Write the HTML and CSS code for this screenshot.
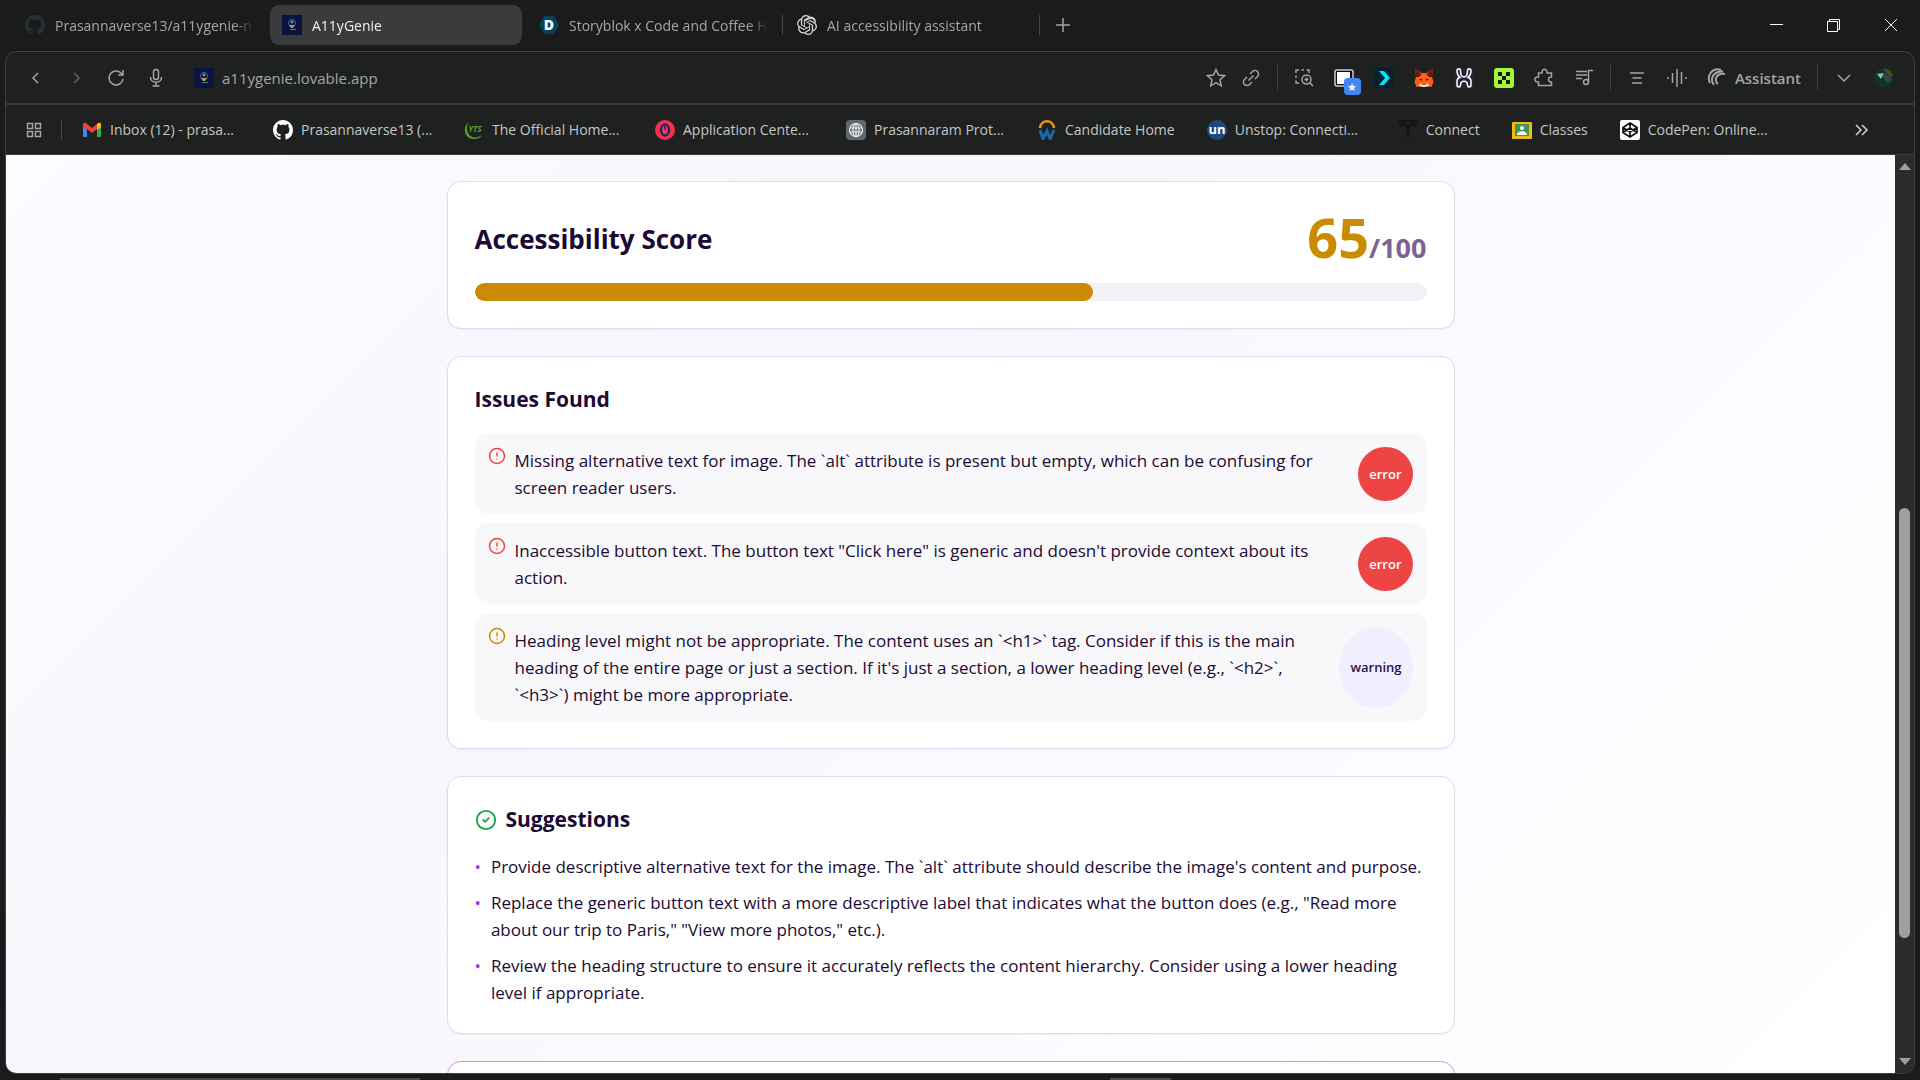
FILE: index.html
```html
<!DOCTYPE html>
<html lang="en">
<head>
    <meta charset="UTF-8">
    <meta name="viewport" content="width=device-width, initial-scale=1.0">
    <title>A11yGenie</title>
    <link rel="stylesheet" href="styles.css">
</head>
<body>

<!-- Shared icons -->
<svg class="sprite" aria-hidden="true">
    <symbol id="github" viewBox="0 0 16 16">
        <path fill="currentColor" d="M8 0C3.58 0 0 3.58 0 8c0 3.54 2.29 6.53 5.47 7.59.4.07.55-.17.55-.38 0-.19-.01-.82-.01-1.49-2.01.37-2.53-.49-2.69-.94-.09-.23-.48-.94-.82-1.13-.28-.15-.68-.52-.01-.53.63-.01 1.08.58 1.23.82.72 1.21 1.87.87 2.33.66.07-.52.28-.87.51-1.07-1.78-.2-3.64-.89-3.64-3.95 0-.87.31-1.59.82-2.15-.08-.2-.36-1.02.08-2.12 0 0 .67-.21 2.2.82.64-.18 1.32-.27 2-.27s1.36.09 2 .27c1.53-1.04 2.2-.82 2.2-.82.44 1.1.16 1.92.08 2.12.51.56.82 1.27.82 2.15 0 3.07-1.87 3.75-3.65 3.95.29.25.54.73.54 1.48 0 1.07-.01 1.93-.01 2.2 0 .21.15.46.55.38A8.01 8.01 0 0 0 16 8c0-4.42-3.58-8-8-8z"/>
    </symbol>
    <symbol id="genie" viewBox="0 0 20 20">
        <rect width="20" height="20" fill="#0b1440"/>
        <circle cx="10" cy="8" r="3.500" fill="none" stroke="#35708c" stroke-width="1"/>
        <circle cx="10" cy="7" r="1.400" fill="#4fa3a0"/>
        <path d="M7 10h6l-2 3H9z" fill="#c98f4c"/>
        <path d="M8 14.500h6" stroke="#338f78" stroke-width="1"/>
    </symbol>
    <symbol id="alert" viewBox="0 0 24 24">
        <g fill="none" stroke="currentColor" stroke-width="2" stroke-linecap="round">
            <circle cx="12" cy="12" r="10"/>
            <path d="M12 8v4M12 16h.01"/>
        </g>
    </symbol>
</svg>

<!-- Tab strip -->
<header class="tab-strip">
    <nav class="tabs">
        <a class="tab" href="#"><svg class="icon dim-github"><use href="#github"/></svg><span class="tab-title">Prasannaverse13/a11ygenie-n</span></a>
        <a class="tab active" href="#"><svg class="icon"><use href="#genie"/></svg><span class="tab-title">A11yGenie</span></a>
        <a class="tab" href="#">
            <svg class="icon" viewBox="0 0 20 20"><path d="M5 1h10l5 9-5 9H5l-5-9z" fill="#04435a"/><text x="10" y="15" text-anchor="middle" class="logo-d">D</text></svg>
            <span class="tab-title">Storyblok x Code and Coffee H</span>
        </a>
        <a class="tab divided" href="#">
            <svg class="icon" viewBox="0 0 24 24"><path fill="#d4d6d6" d="M22.28 9.82a5.98 5.98 0 0 0-.52-4.91 6.05 6.05 0 0 0-6.51-2.9A6.07 6.07 0 0 0 4.98 4.18a5.98 5.98 0 0 0-4 2.9 6.05 6.05 0 0 0 .74 7.1 5.98 5.98 0 0 0 .51 4.91 6.05 6.05 0 0 0 6.51 2.9A5.98 5.98 0 0 0 13.26 24a6.06 6.06 0 0 0 5.77-4.21 5.99 5.99 0 0 0 4-2.9 6.06 6.06 0 0 0-.75-7.07zm-9.02 12.61a4.48 4.48 0 0 1-2.88-1.04l.14-.08 4.78-2.76a.79.79 0 0 0 .39-.68v-6.74l2.02 1.17a.07.07 0 0 1 .04.05v5.58a4.5 4.5 0 0 1-4.49 4.5zM3.6 18.3a4.47 4.47 0 0 1-.53-3.01l.14.09 4.78 2.76a.77.77 0 0 0 .78 0l5.84-3.37v2.33a.08.08 0 0 1-.03.06L9.74 19.95a4.5 4.5 0 0 1-6.14-1.65zM2.34 7.9a4.49 4.49 0 0 1 2.37-1.97v5.68a.77.77 0 0 0 .39.68l5.81 3.35-2.02 1.17a.08.08 0 0 1-.07 0l-4.83-2.79A4.5 4.5 0 0 1 2.34 7.87zm16.6 3.86-5.84-3.39 2.02-1.16a.08.08 0 0 1 .07 0l4.83 2.79a4.49 4.49 0 0 1-.68 8.1v-5.68a.79.79 0 0 0-.4-.66zm2.01-3.02-.14-.09-4.77-2.78a.78.78 0 0 0-.79 0L9.41 10.24V7.9a.07.07 0 0 1 .03-.06l4.83-2.79a4.5 4.5 0 0 1 6.68 4.66zM8.31 12.86l-2.02-1.16a.08.08 0 0 1-.04-.06V6.07a4.5 4.5 0 0 1 7.38-3.45l-.14.08-4.78 2.76a.79.79 0 0 0-.39.68zm1.1-2.36 2.6-1.5 2.6 1.5v3l-2.6 1.5-2.6-1.5z"/></svg>
            <span class="tab-title">AI accessibility assistant</span>
        </a>
    </nav>
    <button class="icon-btn new-tab" aria-label="New tab"><svg class="icon" viewBox="0 0 20 20"><path d="M10 3v14M3 10h14"/></svg></button>
    <div class="window-controls">
        <button class="icon-btn" aria-label="Minimize"><svg class="icon" viewBox="0 0 20 20"><path d="M3 9.500h13"/></svg></button>
        <button class="icon-btn" aria-label="Restore"><svg class="icon" viewBox="0 0 20 20"><path d="M3.500 6.500h10v10h-10zM5.500 6V4.500h10v10H14"/></svg></button>
        <button class="icon-btn" aria-label="Close"><svg class="icon" viewBox="0 0 20 20"><path d="m4 4 12 12M16 4 4 16"/></svg></button>
    </div>
</header>

<div class="window">
    <!-- Address bar -->
    <div class="toolbar">
        <div class="nav-buttons">
            <button class="icon-btn" aria-label="Back"><svg class="icon" viewBox="0 0 20 20"><path d="m12 5-5 5 5 5"/></svg></button>
            <button class="icon-btn faded" aria-label="Forward"><svg class="icon" viewBox="0 0 20 20"><path d="m8 5 5 5-5 5"/></svg></button>
            <button class="icon-btn" aria-label="Reload"><svg class="icon" viewBox="0 0 20 20"><path d="M17 11a7 7 0 1 1-2-6l2 2M17 2v5h-5"/></svg></button>
            <button class="icon-btn" aria-label="Voice"><svg class="icon" viewBox="0 0 20 20"><rect x="7.500" y="1.500" width="5" height="10" rx="2.500"/><path d="M4.500 9c0 7 11 7 11 0M10 14.500V18M6.500 18h7"/></svg></button>
        </div>
        <div class="address">
            <svg class="icon"><use href="#genie"/></svg>
            <input class="url" type="text" value="a11ygenie.lovable.app" aria-label="Address">
        </div>
        <div class="tools tight">
            <button class="icon-btn" aria-label="Bookmark"><svg class="icon" viewBox="0 0 20 20"><path d="m10 1.500 2.500 5.600 6.100.6-4.600 4.100 1.300 6L10 14.700l-5.300 3.100 1.300-6L1.400 7.700l6.100-.6z"/></svg></button>
            <button class="icon-btn" aria-label="Copy link"><svg class="icon" viewBox="0 0 20 20"><path d="M9 6l2.500-2.500a3.400 3.400 0 0 1 5 5L14 11M11 14l-2.500 2.500a3.400 3.400 0 0 1-5-5L6 9M7.500 12.500l5-5"/></svg></button>
        </div>
        <div class="tools">
            <button class="icon-btn" aria-label="Snapshot"><svg class="icon" viewBox="0 0 20 20"><path d="M2 5V2h3M7.500 2h2.500M12.500 2h2.500v3M2 7.500V10M2 12.500V15h3"/><circle cx="12.500" cy="11.500" r="4.500"/><path d="m16 15 3 3M12.500 9.500v4M10.500 11.500h4"/></svg></button>
            <button class="icon-btn badged" aria-label="Saved tabs">
                <svg class="icon" viewBox="0 0 20 20"><rect x="1" y="2" width="18" height="16" rx="2" fill="#111" stroke="#c9cbcb"/><rect x="3" y="4" width="13" height="12" fill="#fff" stroke="none"/></svg>
                <span class="badge-star">★</span>
            </button>
            <button class="icon-btn" aria-label="Arrow extension"><svg class="icon" viewBox="0 0 20 20"><rect width="20" height="20" rx="4" fill="#04212c" stroke="none"/><path d="M5 3h5l6 7-6 7H5l6-7z" fill="#00e5ff" stroke="none"/></svg></button>
            <button class="icon-btn" aria-label="MetaMask"><svg class="icon" viewBox="0 0 20 20"><g stroke="none"><path d="m1 1 6.500 4h5L19 1l-1 8 1.500 5-2 5-4-1-2 1h-3l-2-1-4 1-2-5L2 9z" fill="#ff5c16"/><path d="m1 1 6.500 5L5 9H2zM19 1l-6.500 5L15 9h3z" fill="#661800"/><path d="M5 11h3v2zM15 11h-3v2z" fill="#35190a"/><path d="m7 15 1 2h4l1-2 3 3-5 1H9l-5-1z" fill="#f3e2d8"/></g></svg></button>
            <button class="icon-btn" aria-label="Hyper extension"><svg class="icon" viewBox="0 0 20 20"><rect x="1" width="18" height="20" fill="#24243e" stroke="none"/><path class="hyper" d="M3 3c0-3 3.500-3 3.500 0 0 8 7 8 7 0 0-3 3.500-3 3.500 0 0 4-1 5-3 6.500 2 .5 3 1.500 3 3.500v4c0 2.500-3.500 2.500-3.500 0 0-5-7-5-7 0 0 2.500-3.500 2.500-3.500 0v-4c0-2 1-3 3-3.500C4 8 3 7 3 3z"/></svg></button>
            <button class="icon-btn" aria-label="Grid extension"><svg class="icon" viewBox="0 0 20 20"><g stroke="none"><rect width="20" height="20" rx="3" fill="#a6f53a"/><path d="M4 4h4v4H4zM12 4h4v4h-4zM8 8h4v4H8zM4 12h4v4H4zM12 12h4v4h-4z" fill="#101d0a"/></g></svg></button>
            <button class="icon-btn" aria-label="Extensions"><svg class="icon" viewBox="0 0 20 20"><path d="M4.500 5H8c-.5-5 5.500-5 5 0h4.500v4c-4-.5-4 5.500 0 5v3.500h-13V14c-5 .5-5-5.500 0-5z"/></svg></button>
            <button class="icon-btn" aria-label="Player"><svg class="icon" viewBox="0 0 20 20"><path d="M2 3.500h11M2 7h11M2 10.500h6M14.500 14V2.500H19"/><circle cx="12" cy="14" r="2.500"/></svg></button>
        </div>
        <div class="tools">
            <button class="icon-btn" aria-label="Reader"><svg class="icon" viewBox="0 0 20 20"><path d="M3 5h14M5.500 10h9M5 15h10"/></svg></button>
            <button class="icon-btn" aria-label="Sound"><svg class="icon" viewBox="0 0 20 20"><path d="M1 9v2M5.500 5v10M10 1v18M14.500 4v12M19 9v2"/></svg></button>
            <button class="icon-btn assistant"><svg class="icon" viewBox="0 0 20 20"><path d="M3 15C-1 7 6-1 14 2M7 17C2 10 7 3 16 3.500M11 16C6 11 10 5 18 6" class="thick"/></svg>Assistant</button>
        </div>
        <div class="tools">
            <button class="icon-btn" aria-label="Expand"><svg class="icon" viewBox="0 0 20 20"><path d="m4 7 6 6 6-6"/></svg></button>
            <button class="icon-btn" aria-label="Profile"><svg class="icon" viewBox="0 0 20 20"><g stroke="none"><circle cx="10" cy="10" r="10" fill="#14302a"/><path d="M9 1c5-1 9 2 10 7l-4 1z" fill="#4a461d"/><path d="m10 5 8 6-4 4-5-5z" fill="#33474a"/><path d="M3 6l7-1-3 6z" fill="#7cc7b5"/></g></svg></button>
        </div>
    </div>

    <!-- Bookmarks -->
    <nav class="bookmarks">
        <button class="icon-btn speed-dial" aria-label="Speed dial"><svg class="icon" viewBox="0 0 20 20"><path d="M3.500 3.500h5v5h-5zM11.500 3.500h5v5h-5zM3.500 11.500h5v5h-5zM11.500 11.500h5v5h-5z"/></svg></button>
        <a class="bookmark long" href="#"><svg class="icon" viewBox="0 0 20 20"><path d="M1 17V5l4 3v9z" fill="#4285f4"/><path d="M15 17V8l4-3v12z" fill="#34a853"/><path d="M1 7V4c0-1 2-2 4 0l5 4 5-4v5l-5 4-5-4v1z" fill="#ea4335"/><path d="M15 4c2-2 4-1 4 0v3l-4 3z" fill="#fbbc04"/></svg><span>Inbox (12) - prasa...</span></a>
        <a class="bookmark long" href="#"><svg class="icon white"><use href="#github"/></svg><span>Prasannaverse13 (...</span></a>
        <a class="bookmark long" href="#"><svg class="icon" viewBox="0 0 20 20"><path d="M5 2C-2 7 0 19 10 19c3 0 6-1 8-4-5 4-12 3-14-2-2-4-1-8 1-11z" fill="#58a52b"/><text x="11" y="12" text-anchor="middle" class="logo-yts">YTS</text></svg><span>The Official Home...</span></a>
        <a class="bookmark long" href="#"><svg class="icon" viewBox="0 0 20 20"><circle cx="10" cy="10" r="10" fill="#fa2f4f"/><ellipse cx="10" cy="10" rx="4" ry="5.500" fill="#fb4055" stroke="#27245f" stroke-width="2.500"/><path d="M10 6v4" stroke="#27245f" stroke-width="1.500"/></svg><span>Application Cente...</span></a>
        <a class="bookmark long" href="#"><svg class="icon" viewBox="0 0 20 20"><rect width="20" height="20" rx="4" fill="#5f686d"/><g fill="none" stroke="#f0f2f2" stroke-width="1.200"><circle cx="10" cy="10" r="6.500"/><ellipse cx="10" cy="10" rx="3" ry="6.500"/><path d="M10 3.500v13M4 8h12M4 12h12"/></g></svg><span>Prasannaram Prot...</span></a>
        <a class="bookmark" href="#"><svg class="icon" viewBox="0 0 20 20"><path d="M3 8c1-9 13-9 14 0" fill="none" stroke="#e8951c" stroke-width="2.500"/><path d="m3 10 3 9 4-8 3 8 4-9" fill="none" stroke="#1769a8" stroke-width="3"/></svg><span>Candidate Home</span></a>
        <a class="bookmark long" href="#"><svg class="icon" viewBox="0 0 20 20"><circle cx="10" cy="10" r="10" fill="#1c4980"/><text x="10" y="14" text-anchor="middle" class="logo-un">un</text></svg><span>Unstop: Connecti...</span></a>
        <a class="bookmark" href="#"><svg class="icon" viewBox="0 0 20 20"><path d="M0 1c6-2 14-2 20 0l-1 2c-6-2-12-2-18 0zM2 4c3-1 5-1 6 0l2 2 2-2c1-1 3-1 6 0l-1 2c-2-1-4-1-5 0l-2 13L8 6c-1-1-3-1-5 0z" fill="#101211"/></svg><span>Connect</span></a>
        <a class="bookmark" href="#"><svg class="icon" viewBox="0 0 20 20"><rect y="2" width="20" height="17" rx="1" fill="#f5b912"/><rect x="3" y="4" width="14" height="12" fill="#3f9654"/><circle cx="10" cy="8" r="2" fill="#fff"/><path d="M5 15c0-5 10-5 10 0z" fill="#fff"/></svg><span>Classes</span></a>
        <a class="bookmark" href="#"><svg class="icon" viewBox="0 0 20 20"><rect width="20" height="20" rx="2" fill="#fff"/><path d="m10 3 7 4.500v5L10 17l-7-4.500v-5zM10 3v5M10 12v5M3 7.500l7 4.500 7-4.500M3 12.500 10 8l7 4.500" fill="none" stroke="#111" stroke-width="1.700"/></svg><span>CodePen: Online...</span></a>
        <button class="icon-btn more" aria-label="More bookmarks"><svg class="icon" viewBox="0 0 20 20"><path d="m4 5 5 5-5 5M10 5l5 5-5 5"/></svg></button>
    </nav>

    <div class="viewport">
        <main class="page">
            <div class="container">
                <!-- Score -->
                <section class="card">
                    <div class="score-row">
                        <h2>Accessibility Score</h2>
                        <div class="score">65<span class="score-total">/100</span></div>
                    </div>
                    <div class="progress"><div class="progress-fill" style="width: 65%"></div></div>
                </section>

                <!-- Issues -->
                <section class="card">
                    <h3>Issues Found</h3>
                    <ul class="issues">
                        <li class="issue error">
                            <svg class="issue-icon"><use href="#alert"/></svg>
                            <p>Missing alternative text for image. The `alt` attribute is present but empty, which can be confusing for screen reader users.</p>
                            <span class="badge">error</span>
                        </li>
                        <li class="issue error">
                            <svg class="issue-icon"><use href="#alert"/></svg>
                            <p>Inaccessible button text. The button text "Click here" is generic and doesn't provide context about its action.</p>
                            <span class="badge">error</span>
                        </li>
                        <li class="issue warning">
                            <svg class="issue-icon"><use href="#alert"/></svg>
                            <p>Heading level might not be appropriate. The content uses an `&lt;h1&gt;` tag. Consider if this is the main heading of the entire page or just a section. If it's just a section, a lower heading level (e.g., `&lt;h2&gt;`, `&lt;h3&gt;`) might be more appropriate.</p>
                            <span class="badge">warning</span>
                        </li>
                    </ul>
                </section>

                <!-- Suggestions -->
                <section class="card">
                    <h3><svg class="check-icon" viewBox="0 0 24 24"><circle cx="12" cy="12" r="10"/><path d="m9 12 2 2 4-4"/></svg>Suggestions</h3>
                    <ul class="suggestions">
                        <li><span class="bullet">•</span><p>Provide descriptive alternative text for the image. The `alt` attribute should describe the image's content and purpose.</p></li>
                        <li><span class="bullet">•</span><p>Replace the generic button text with a more descriptive label that indicates what the button does (e.g., "Read more about our trip to Paris," "View more photos," etc.).</p></li>
                        <li><span class="bullet">•</span><p>Review the heading structure to ensure it accurately reflects the content hierarchy. Consider using a lower heading level if appropriate.</p></li>
                    </ul>
                </section>

                <section class="card highlight"></section>
            </div>
        </main>
        <div class="scrollbar">
            <span class="arrow up"></span>
            <div class="thumb"></div>
            <span class="arrow down"></span>
        </div>
    </div>
</div>

<footer class="desktop-edge">
    <span class="edge-search"></span>
    <span class="edge-app"></span>
</footer>

</body>
</html>
```
FILE: styles.css
```css
* {
    box-sizing: border-box;
}

body {
    margin: 0;
    height: 100vh;
    display: flex;
    flex-direction: column;
    overflow: hidden;
    background: #1a1c1b;
    color: #c4c6c6;
    font-family: "Segoe UI", "Open Sans", sans-serif;
    font-size: 14px;
}

h2, h3, p, ul {
    margin: 0;
    padding: 0;
}

ul {
    list-style: none;
}

a {
    color: inherit;
    text-decoration: none;
}

.sprite {
    display: none;
}

.icon {
    width: 20px;
    height: 20px;
    flex: none;
    display: block;
}

.icon-btn {
    padding: 0;
    border: none;
    background: none;
    color: #a3a5a5;
    font: inherit;
    cursor: pointer;
}

.icon-btn .icon {
    fill: none;
    stroke: currentColor;
    stroke-width: 1.5;
    overflow: visible;
}

.icon-btn .thick {
    stroke-width: 2;
}

.icon-btn .hyper {
    stroke: #fff;
}

.icon-btn.faded {
    color: #606262;
}

.white {
    color: #fff;
}

/* Tab strip */
.tab-strip {
    display: flex;
    align-items: center;
    height: 51px;
    padding: 0 19px 1px 12px;
}

.tabs {
    display: flex;
    align-items: center;
}

.tab {
    display: flex;
    align-items: center;
    gap: 10px;
    width: 258px;
    height: 40px;
    padding: 0 16px 0 13px;
    border-radius: 9px;
    color: #a5a7a7;
    position: relative;
}

.tab.active {
    width: 252px;
    padding-left: 12px;
    background: #393b3c;
    color: #f2f2f2;
    margin-right: 4px;
}

.tab-title {
    flex: 1;
    overflow: hidden;
    white-space: nowrap;
    mask-image: linear-gradient(to right, #000 90%, transparent);
}

.tab.divided::before, .tab.divided::after {
    content: "";
    position: absolute;
    top: 10px;
    left: -2px;
    width: 1px;
    height: 20px;
    background: #454747;
}

.tab.divided::after {
    left: auto;
    right: 2px;
}

.dim-github {
    color: #2a3038;
}

.new-tab {
    margin-left: 11px;
}

.logo-d {
    fill: #fff;
    font-size: 14px;
    font-weight: 800;
}

.logo-yts {
    fill: #58a52b;
    font-size: 8px;
    font-style: italic;
    font-weight: 700;
}

.logo-un {
    fill: #fff;
    font-size: 13px;
    font-weight: 700;
}

.window-controls {
    display: flex;
    gap: 37px;
    margin-left: auto;
}

.window-controls .icon-btn {
    color: #fff;
}

.window-controls .icon {
    stroke-width: 1;
}

/* Browser window */
.window {
    flex: 1;
    min-height: 0;
    display: flex;
    flex-direction: column;
    margin: 0 5px;
    border: 1px solid #3e4040;
    border-radius: 11px;
    background: #1f2120;
    overflow: hidden;
}

.toolbar {
    display: flex;
    align-items: center;
    height: 53px;
    padding: 0 20px;
    border-bottom: 2px solid #383a3a;
}

.nav-buttons {
    display: flex;
    gap: 20px;
}

.address {
    flex: 1;
    display: flex;
    align-items: center;
    gap: 8px;
    margin-left: 28px;
}

.url {
    flex: 1;
    padding: 0;
    border: none;
    outline: none;
    background: none;
    color: #a3a5a5;
    font: inherit;
    font-size: 15px;
}

.tools {
    display: flex;
    align-items: center;
    gap: 20px;
}

.tools.tight {
    gap: 15px;
}

.tools + .tools::before {
    content: "";
    width: 1px;
    height: 25px;
    margin: 0 -4px;
    background: #424444;
}

.tools + .tools {
    padding-left: 20px;
}

.assistant {
    display: flex;
    align-items: center;
    gap: 8px;
    font-size: 15px;
    font-weight: 600;
}

.badged {
    position: relative;
}

.badge-star {
    position: absolute;
    top: 10px;
    left: 10px;
    width: 17px;
    height: 17px;
    border-radius: 4px;
    background: #4285f4;
    color: #fff;
    font-size: 11px;
    line-height: 17px;
    text-align: center;
}

/* Bookmarks */
.bookmarks {
    display: flex;
    align-items: center;
    gap: 32px;
    height: 50px;
    padding: 0 42px 0 18px;
    border-bottom: 1px solid #383a3a;
}

.icon-btn.speed-dial {
    padding-right: 17px;
    margin-right: -12px;
    border-right: 1px solid #454747;
}

.bookmark {
    display: flex;
    align-items: center;
    gap: 8px;
    white-space: nowrap;
}

.bookmark.long span {
    width: 131px;
}

.icon-btn.more {
    margin-left: auto;
    color: #d0d2d2;
}

/* Page */
.viewport {
    flex: 1;
    min-height: 0;
    display: flex;
}

.page {
    flex: 1;
    overflow: hidden;
    padding: 26px 27px 0;
    background: linear-gradient(135deg, #fdfbff 0%, #f8f6fc 35%, #fcfaff 65%, #ffffff 100%);
    color: #1c0a33;
    font-size: 17px;
    line-height: 27px;
}

.container {
    display: flex;
    flex-direction: column;
    gap: 27px;
    max-width: 1008px;
    margin: 0 auto;
}

.card {
    padding: 27px;
    border: 1px solid #dedbec;
    border-radius: 14px;
    background: #fff;
    box-shadow: 0 1px 2px rgba(0, 0, 0, 0.05);
}

.card.highlight {
    min-height: 200px;
    border-color: #c79bea;
}

h2 {
    font-size: 26px;
    line-height: 36px;
}

h3 {
    display: flex;
    align-items: center;
    gap: 9px;
    margin-bottom: 18px;
    font-size: 21px;
    line-height: 31px;
}

.score-row {
    display: flex;
    align-items: center;
    justify-content: space-between;
    height: 60px;
    margin-bottom: 14px;
}

.score {
    padding-top: 6px;
    color: #ca8a04;
    font-size: 54px;
    font-weight: 700;
    line-height: 60px;
}

.score-total {
    color: #7c6394;
    font-size: 27px;
}

.progress {
    height: 18px;
    border-radius: 9px;
    background: #f2f1f7;
    overflow: hidden;
}

.progress-fill {
    height: 100%;
    border-radius: 9px;
    background: #ca8a04;
}

.issues, .suggestions {
    display: flex;
    flex-direction: column;
    gap: 9px;
}

.issue {
    display: flex;
    gap: 9px;
    padding: 14px 14px 13px 13px;
    border-radius: 14px;
    background: #f8f8fa;
}

.issue p {
    flex: 1;
}

.issue-icon {
    width: 18px;
    height: 18px;
    flex: none;
}

.error .issue-icon {
    color: #ef4444;
}

.warning .issue-icon {
    color: #ca8a04;
}

.badge {
    display: flex;
    align-items: center;
    margin-left: 5px;
    padding: 0 11px;
    border-radius: 50%;
    background: #ef4444;
    color: #fff;
    font-size: 13px;
    font-weight: 600;
}

.warning .badge {
    background: #f1effd;
    color: #2d1248;
}

.check-icon {
    width: 22px;
    height: 22px;
    fill: none;
    stroke: #16a34a;
    stroke-width: 2;
    stroke-linecap: round;
    stroke-linejoin: round;
}

.suggestions li {
    display: flex;
    gap: 10px;
}

.bullet {
    color: #9333ea;
}

/* Scrollbar */
.scrollbar {
    display: flex;
    flex-direction: column;
    align-items: center;
    width: 19px;
    padding: 8px 0;
    background: #2c2c2c;
}

.arrow {
    border: 6px solid transparent;
}

.arrow.up {
    border-top: none;
    border-bottom: 7px solid #9f9f9f;
}

.arrow.down {
    border-bottom: none;
    border-top: 7px solid #9f9f9f;
}

.thumb {
    width: 11px;
    height: 430px;
    margin: auto 0 120px;
    border-radius: 6px;
    background: #9f9f9f;
}

/* Sliver of the taskbar under the window */
.desktop-edge {
    display: flex;
    align-items: flex-end;
    justify-content: space-between;
    height: 6px;
    padding: 0 39% 0 60px;
}

.edge-search, .edge-app {
    width: 360px;
    height: 2px;
    background: #4c4e4e;
}

.edge-app {
    width: 61px;
}
```
